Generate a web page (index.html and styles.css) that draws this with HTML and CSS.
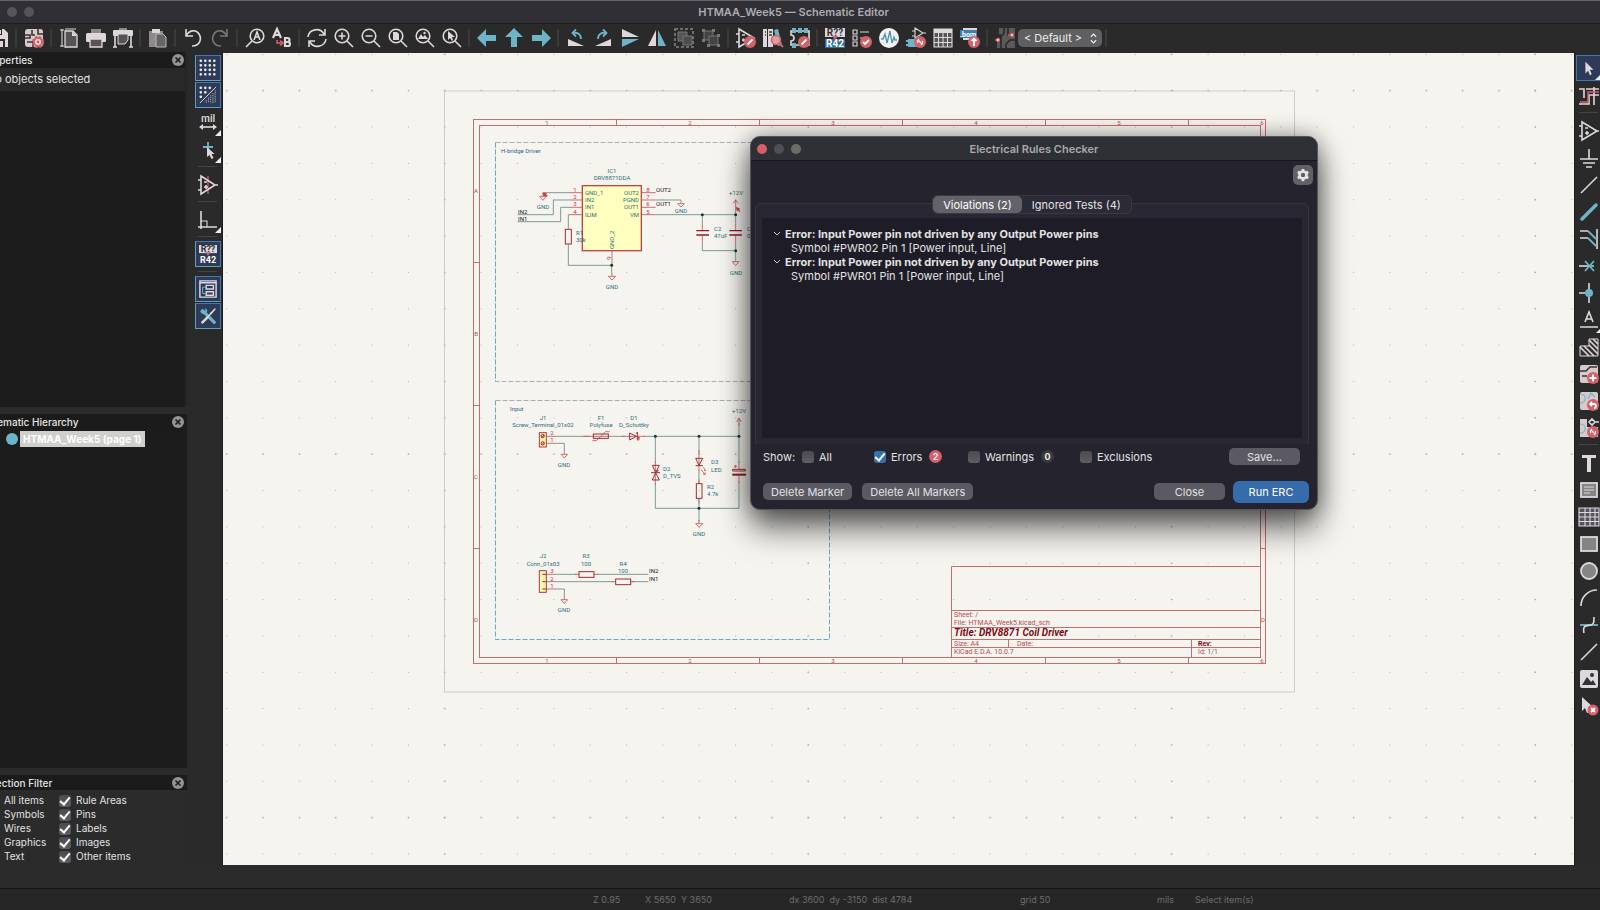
FILE: index.html
```html
<!DOCTYPE html>
<html lang="en">
<head>
<meta charset="utf-8">
<title>HTMAA_Week5 — Schematic Editor</title>
<link rel="stylesheet" href="styles.css">
</head>
<body>
<header class="titlebar">
  <span class="light"></span><span class="light"></span>
  <h1 class="window-title">HTMAA_Week5 — Schematic Editor</h1>
</header>

<nav class="toolbar" aria-label="Main toolbar">
  <button class="tool" aria-label="Save"><svg viewBox="0 0 20 20"><path class="lt" d="M1 1h14l4 4v14H1z"/><path class="bg" d="M5 1h8v6H5zM4 11h12v8H4z"/><path class="lt" d="M6 13h8v6H6zM10 2h2v4h-2z"/></svg></button>
  <i class="sep"></i>
  <button class="tool" aria-label="Schematic setup"><svg viewBox="0 0 20 20"><rect class="pk" x="1" y="1" width="18" height="18" rx="3"/><path class="dk-line" d="M1 7h5v3H1M14 1v5h5M8 2v5h3M3 14h6v5"/><circle cx="14" cy="14" r="5" fill="#d2616a"/><circle cx="14" cy="14" r="4.9" fill="none" stroke="#d2616a" stroke-width="2.4" stroke-dasharray="2.4 1.5"/><circle cx="14" cy="14" r="3" fill="#eadfe2"/><circle cx="14" cy="14" r="1.4" fill="#d2616a"/></svg></button>
  <i class="sep"></i>
  <button class="tool" aria-label="Page settings"><svg viewBox="0 0 20 20"><path class="ln thin" d="M3 1v18M1 2h4M1 18h4M6 1h11"/><path d="M6 3h8l4 4v12H6z" fill="#555" stroke="#ded8dc" stroke-width="1.3"/><path class="lt" d="M13 3v5h5z"/></svg></button>
  <button class="tool" aria-label="Print"><svg viewBox="0 0 20 20"><path class="gy" d="M5 1h10v5H5z"/><rect class="lt" y="5" width="20" height="9" rx="1.5"/><path d="M4 11h12v8H4z" fill="#555" stroke="#ded8dc" stroke-width="1.3"/></svg></button>
  <button class="tool" aria-label="Plot"><svg viewBox="0 0 20 20"><path class="gy" d="M6 0h8v3H6z"/><rect class="lt" y="2" width="20" height="6" rx="1"/><path class="ln" d="M2 8v11M18 8v11M0 19h4M16 19h4"/><path d="M5 6h10v6l-3 4H5z" fill="#555" stroke="#ded8dc"/></svg></button>
  <i class="sep"></i>
  <button class="tool" aria-label="Paste"><svg viewBox="0 0 20 20"><path class="gy" d="M1 3h14v16H1z"/><path class="lt" d="M4 1h8v4H4z"/><path d="M8 6h7l3 3v10H8z" fill="#666" stroke="#bdb8bb"/></svg></button>
  <i class="sep"></i>
  <button class="tool" aria-label="Undo"><svg viewBox="0 0 20 20"><path class="ln" d="M3 1v7h7M3 8C6 2 13 1 16 6s1 12-7 12"/></svg></button>
  <button class="tool" aria-label="Redo" disabled><svg viewBox="0 0 20 20"><path class="ln dim" d="M17 1v7h-7M17 8C14 2 7 1 4 6s-1 12 7 12"/></svg></button>
  <i class="sep"></i>
  <button class="tool" aria-label="Find"><svg viewBox="0 0 20 20"><circle class="ln" cx="12" cy="8" r="6.8"/><path class="ln" d="M7 13l-6 6M9 12l3-8 3 8M10 9h4"/></svg></button>
  <button class="tool" aria-label="Find and replace"><svg viewBox="0 0 20 20"><path class="ln bold" d="M1 10L5 1l4 9M2 7h6M13 10v8h3a2 2 0 000-4h-3 2.500a2 2 0 000-4z"/><path d="M5 12v3h5M8 12.500l3 2.500-3 2.500" fill="none" stroke="#d2616a" stroke-width="1.600"/></svg></button>
  <i class="sep"></i>
  <button class="tool" aria-label="Refresh"><svg viewBox="0 0 20 20"><path class="ln" d="M1 9C2 1 13-1 17 6M18 1v6h-6M19 11c-1 8-12 10-16 3M2 19v-6h6"/></svg></button>
  <button class="tool" aria-label="Zoom in"><svg viewBox="0 0 20 20"><circle class="ln" cx="8" cy="8" r="6.800"/><path class="ln" d="M13 13l6 6M8 4.500v7M4.500 8h7"/></svg></button>
  <button class="tool" aria-label="Zoom out"><svg viewBox="0 0 20 20"><circle class="ln" cx="8" cy="8" r="6.800"/><path class="ln" d="M13 13l6 6M4.500 8h7"/></svg></button>
  <button class="tool" aria-label="Zoom to page"><svg viewBox="0 0 20 20"><circle class="ln" cx="8" cy="8" r="6.800"/><path class="ln" d="M13 13l6 6"/><path class="lt" d="M5 4h4l2 2v6H5z"/></svg></button>
  <button class="tool" aria-label="Zoom to objects"><svg viewBox="0 0 20 20"><circle class="ln" cx="8" cy="8" r="6.800"/><path class="ln" d="M13 13l6 6"/><path class="lt" d="M3 11l3-5 2 3 2-2 3 4z"/><circle class="lt" cx="9.500" cy="5" r="1.200"/></svg></button>
  <button class="tool" aria-label="Zoom to selection"><svg viewBox="0 0 20 20"><circle class="ln" cx="8" cy="8" r="6.800"/><path class="ln" d="M13 13l6 6"/><path class="lt" d="M6 3v9l2-2 2 3 1-1-1-3h3z"/></svg></button>
  <i class="sep"></i>
  <button class="tool" aria-label="Back"><svg viewBox="0 0 20 20"><path class="bl" d="M0 10l9-9v6h10v6H9v6z"/></svg></button>
  <button class="tool" aria-label="Up"><svg viewBox="0 0 20 20"><path class="bl" d="M10 0l9 9h-6v10H7V9H1z"/></svg></button>
  <button class="tool" aria-label="Forward"><svg viewBox="0 0 20 20"><path class="bl" d="M20 10l-9-9v6H1v6h10v6z"/></svg></button>
  <i class="sep"></i>
  <button class="tool" aria-label="Rotate counterclockwise"><svg viewBox="0 0 20 20"><path class="lt" d="M2 11v7h16z"/><path class="bln" d="M15 11c0-5-4-7-8-6M10 1.500L6.500 5 10 8.500"/></svg></button>
  <button class="tool" aria-label="Rotate clockwise"><svg viewBox="0 0 20 20"><path class="lt" d="M18 11v7H2z"/><path class="bln" d="M5 11c0-5 4-7 8-6M10 1.500L13.500 5 10 8.500"/></svg></button>
  <button class="tool" aria-label="Mirror vertically"><svg viewBox="0 0 20 20"><path class="lt" d="M2 1v8h17z"/><path class="bl" d="M2 19v-8h17z"/></svg></button>
  <button class="tool" aria-label="Mirror horizontally"><svg viewBox="0 0 20 20"><path class="lt" d="M9 2v16H1z"/><path class="bl" d="M11 2v16h8z"/></svg></button>
  <button class="tool" aria-label="Group" disabled><svg viewBox="0 0 20 20"><rect x="1" y="1" width="18" height="18" fill="none" stroke="#858585" stroke-width="1.500" stroke-dasharray="3 2"/><path d="M4 4h9v9H4z" fill="#555" stroke="#777"/><path d="M9 8h9v9H9z" fill="#4c4c4c" stroke="#777"/></svg></button>
  <button class="tool" aria-label="Ungroup" disabled><svg viewBox="0 0 20 20"><path d="M3 3h9v9H3z" fill="#444" stroke="#777"/><path d="M8 8h9v9H8z" fill="#444" stroke="#777"/><path d="M1 1h3v3H1zM11 1h3v3h-3zM1 11h3v3H1zM16 6h3v3h-3zM16 16h3v3h-3zM6 16h3v3H6z" fill="#777"/></svg></button>
  <i class="sep"></i>
  <button class="tool" aria-label="Symbol editor"><svg viewBox="0 0 20 20"><path class="ln" d="M3 1v18L18 10zM0 6h3M0 14h3M6 7h3M6 12h3M7.500 10.500v3"/><circle class="rd" cx="14" cy="14" r="6"/><path class="wl" d="M11.500 16.500l5-5"/></svg></button>
  <button class="tool" aria-label="Symbol libraries"><svg viewBox="0 0 20 20"><path class="lt" d="M0 1h4v18H0zM5 1h5v18H5z"/><path class="dk-line" d="M2 4h1M6 4h3M6 7h3M2 7h1"/><path class="bl" d="M11 2l4-1 4 16-4 1z"/><circle cx="13" cy="12" r="4.500" fill="#d9a0a5" stroke="#d2616a" stroke-width="1.600"/><path d="M16 15l4 4" stroke="#d2616a" stroke-width="2"/></svg></button>
  <button class="tool" aria-label="Footprint editor"><svg viewBox="0 0 20 20"><path class="ln" d="M1 3v4a3 3 0 010 6v4h18V3z"/><path class="bl" d="M2 0h4v5H2zM8 0h4v5H8zM14 0h4v5h-4zM2 15h4v5H2z"/><circle class="rd" cx="14" cy="14" r="6"/><path class="wl" d="M11.500 16.500l5-5"/></svg></button>
  <i class="sep"></i>
  <button class="tool" aria-label="Annotate"><svg viewBox="0 0 20 20"><path class="lt" d="M0 0h20v9H0z"/><path fill="#2d6ca4" d="M0 11h20v9H0z"/><path class="rd" d="M7 8h6l-3 4z"/><text class="t42 dark" x="10" y="8" text-anchor="middle">R??</text><text class="t42" x="10" y="19" text-anchor="middle">R42</text></svg></button>
  <button class="tool" aria-label="Electrical rules checker"><svg viewBox="0 0 20 20"><path class="ln thin" d="M1 2h4v4H1zM1 8h4v4H1zM1 14h4v4H1zM8 4h9M8 10h4"/><circle class="rd" cx="14" cy="14" r="6"/><path class="wl" d="M11 14l2 2 4-4"/></svg></button>
  <button class="tool" aria-label="Simulator"><svg viewBox="0 0 20 20"><circle cx="10" cy="10" r="10" fill="#f3f3f3"/><path d="M2 11h2l2-5 2 9 3-12 2 12 2-6 1 3h2" fill="none" stroke="#4796ad" stroke-width="1.300"/></svg></button>
  <button class="tool" aria-label="Assign footprints"><svg viewBox="0 0 20 20"><path class="ln thin" d="M9 0v10l8-5zM6 3h3M6 8h3M17 5h3"/><path class="bl" d="M2 11h8v8H2zM0 12h2v2H0zM0 16h2v2H0z"/><circle class="rd" cx="14" cy="14" r="6"/><path class="wl thin" d="M12 15a2 2 0 010-3l1-1M16 13a2 2 0 010 3l-1 1M12.500 12.500l3 3"/></svg></button>
  <button class="tool" aria-label="Symbol fields table"><svg viewBox="0 0 20 20"><path fill="#555" d="M1 1h18v18H1z"/><path class="lt" d="M1 1h18v4H1z"/><path class="ln thin" d="M1 1h18v18H1zM1 9.500h18M1 14.500h18M5.500 5v14M10 5v14M14.500 5v14"/></svg></button>
  <button class="tool" aria-label="Bill of materials"><svg viewBox="0 0 20 20"><path class="lt" d="M3 0h14v12H3z"/><path fill="#3f7fb0" d="M0 2h17v8H0z"/><text class="tbom" x="8" y="9" text-anchor="middle">.bom</text><circle class="rd" cx="14" cy="14" r="6"/><path class="wl" d="M14 18v-7M11.500 13l2.500-2.500 2.500 2.500"/></svg></button>
  <i class="sep"></i>
  <button class="tool" aria-label="Open PCB"><svg viewBox="0 0 20 20"><path fill="#5a5a5a" d="M4 0h16v20H2v-6h4V6H4z"/><path d="M9 0v5l-3 4v11M13 0v7h7M20 12h-5l-4 4v4" fill="none" stroke="#292929" stroke-width="1.600"/><path d="M0 12h3M13 7h5" stroke="#d2616a" stroke-width="1.300"/><circle cx="3" cy="12" r="1.600" fill="#eee" stroke="#d2616a" stroke-width="1.300"/><circle cx="17" cy="7" r="1.600" fill="#eee" stroke="#d2616a" stroke-width="1.300"/></svg></button>
  <label class="variant"><select aria-label="Design variant"><option>&lt; Default &gt;</option></select><svg viewBox="0 0 8 12"><path d="M1 4l3-3 3 3M1 8l3 3 3-3"/></svg></label>
  <i class="sep"></i>
</nav>

<main class="workspace">
  <aside class="sidebar">
    <section class="panel panel-props">
      <h2 class="panel-head"><span class="cut cut-a">Properties</span><button class="close" aria-label="Close properties"><svg viewBox="0 0 12 12"><circle cx="6" cy="6" r="6"/><path d="M3.500 3.500l5 5M8.500 3.500l-5 5"/></svg></button></h2>
      <p class="note"><span class="cut cut-b">No objects selected</span></p>
    </section>
    <section class="panel panel-tree">
      <h2 class="panel-head"><span class="cut cut-c">Schematic Hierarchy</span><button class="close" aria-label="Close hierarchy"><svg viewBox="0 0 12 12"><circle cx="6" cy="6" r="6"/><path d="M3.500 3.500l5 5M8.500 3.500l-5 5"/></svg></button></h2>
      <div class="tree-row"><span class="node"></span><span class="node-label">HTMAA_Week5 (page 1)</span></div>
    </section>
    <section class="filter">
      <h2 class="panel-head"><span class="cut cut-d">Selection Filter</span><button class="close" aria-label="Close filter"><svg viewBox="0 0 12 12"><circle cx="6" cy="6" r="6"/><path d="M3.500 3.500l5 5M8.500 3.500l-5 5"/></svg></button></h2>
      <div class="filter-grid">
        <span>All items</span><label><input type="checkbox" checked>Rule Areas</label>
        <span>Symbols</span><label><input type="checkbox" checked>Pins</label>
        <span>Wires</span><label><input type="checkbox" checked>Labels</label>
        <span>Graphics</span><label><input type="checkbox" checked>Images</label>
        <span>Text</span><label><input type="checkbox" checked>Other items</label>
      </div>
    </section>
  </aside>

  <nav class="side-tools left-tools" aria-label="View tools">
    <button class="tool on" aria-label="Grid"><svg viewBox="0 0 20 20"><path class="dots" d="M2 2h18M2 7h18M2 12h18M2 17h18"/></svg></button>
    <button class="tool on" aria-label="Grid overrides"><svg viewBox="0 0 20 20"><path class="dots" d="M2 2h12M2 7h6M2 12h2"/><path class="ln thin" d="M1 19L19 1"/><path class="ln fine" d="M18 5v14M15.500 8v11M13 10.500v8.500M10.500 13v6M8 15.500v3.500"/></svg></button>
    <button class="tool corner" aria-label="Units"><svg viewBox="0 0 20 20"><text class="tmil" x="10" y="9" text-anchor="middle">mil</text><path class="ln" d="M3 14h14"/><path class="lt" d="M1 14l4-3v6zM19 14l-4-3v6z"/></svg></button>
    <button class="tool corner" aria-label="Cursor shape"><svg viewBox="0 0 20 20"><path class="bln" d="M10 2v10M5 7h10"/><path class="lt" d="M9 7v10l2.500-2 2 4 2-1-2-4h3z"/></svg></button>
    <i class="hsep"></i>
    <button class="tool" aria-label="Hidden pins"><svg viewBox="0 0 20 20"><path d="M10 1v18" stroke="#b65a62" stroke-width="1.500"/><path class="ln" d="M3 1v18L17 10zM0 5h3M0 15h3M17 10h3M6 12h4M8 10v4M6 7h3"/></svg></button>
    <i class="hsep"></i>
    <button class="tool corner" aria-label="Line mode"><svg viewBox="0 0 20 20"><path class="ln" d="M3 1v18M0 17h19"/><path class="ln thin" d="M3 11h6v6"/></svg></button>
    <i class="hsep"></i>
    <button class="tool on" aria-label="Auto annotate"><svg viewBox="0 0 20 20"><path class="lt" d="M0 0h20v9H0z"/><path class="rd" d="M7 8h6l-3 4z"/><text class="t42 dark" x="10" y="8" text-anchor="middle">R??</text><text class="t42" x="10" y="20" text-anchor="middle">R42</text></svg></button>
    <i class="hsep"></i>
    <button class="tool on" aria-label="Hierarchy"><svg viewBox="0 0 20 20"><path class="ln" d="M1 1h18v18H1zM1 3h18"/><path class="ln" d="M8 6h8v4H8zM8 13h8v4H8z"/><path class="bln thin" d="M8 8H4v7h4"/></svg></button>
    <button class="tool on" aria-label="Properties"><svg viewBox="0 0 20 20"><path d="M4 4l13 13" stroke="#6cb4c8" stroke-width="3.500" stroke-linecap="round"/><path d="M1 4a5 5 0 004 4 4 4 0 004-5L7 1v4H4z" fill="#6cb4c8"/><path class="lt" d="M19 1l-7 6 1 2zM9 10l2 2-7 7-2-2z"/><path class="ln" d="M18 2L9 12"/></svg></button>
  </nav>

  <div class="canvas">
    <svg class="sheet" aria-label="Schematic sheet">
      <defs>
        <pattern id="dots" x="208.500" y="72.500" width="36.350" height="36.350" patternUnits="userSpaceOnUse"><rect x="17.700" y="17.700" width="1" height="1" fill="#b4b4b4"/></pattern>
        <pattern id="row" x="208.500" y="72.500" width="36.350" height="363.500" patternUnits="userSpaceOnUse"><rect x="17.500" y="17.500" width="1.500" height="1.300" fill="#aaa"/></pattern>
        <pattern id="col" x="426.500" y="72.500" width="363.500" height="36.350" patternUnits="userSpaceOnUse"><rect x="17.500" y="17.500" width="1.500" height="1.300" fill="#aaa"/></pattern>
      </defs>
      <g transform="translate(-223 -53)">
        <g><rect width="4000" height="3000" fill="url(#dots)"/><rect width="4000" height="3000" fill="url(#row)"/><rect width="4000" height="3000" fill="url(#col)"/></g>
        <rect class="page" x="444.500" y="91" width="850" height="601"/>
        <g class="frame">
          <rect x="473.500" y="119.500" width="792" height="544"/><rect x="479.500" y="125.500" width="781" height="532"/>
          <path d="M616.500 119.500v6M759.500 119.500v6M902.500 119.500v6M1045.500 119.500v6M1188.500 119.500v6M616.500 657.500v6M759.500 657.500v6M902.500 657.500v6M1045.500 657.500v6M1188.500 657.500v6M473.500 262.500h6M473.500 405.500h6M473.500 548.500h6M1260.500 262.500h5M1260.500 405.500h5M1260.500 548.500h5"/>
          <path d="M951.500 657.500V566.500h309M951.500 610.500h309M951.500 627.500h309M951.500 639.500h309M951.500 647.500h309M1008.500 639.500v8M1191.500 639.500v18"/>
        </g>
        <g class="frame-text mid">
          <text x="547" y="125">1</text><text x="690" y="125">2</text><text x="833" y="125">3</text><text x="976" y="125">4</text><text x="1119" y="125">5</text><text x="1262" y="125">6</text>
          <text x="547" y="663">1</text><text x="690" y="663">2</text><text x="833" y="663">3</text><text x="976" y="663">4</text><text x="1119" y="663">5</text><text x="1262" y="663">6</text>
          <text x="476" y="193">A</text><text x="476" y="336">B</text><text x="476" y="479">C</text><text x="476" y="622">D</text><text x="1263" y="622">D</text>
        </g>
        <g class="frame-text info">
          <text x="954" y="617">Sheet: /</text><text x="954" y="625">File: HTMAA_Week5.kicad_sch</text>
          <text class="doc-title" x="954" y="636">Title: DRV8871 Coil Driver</text>
          <text x="954" y="646">Size: A4</text><text x="1017" y="646">Date:</text><text class="rev" x="1198" y="646">Rev:</text>
          <text x="954" y="654">KiCad E.D.A. 10.0.7</text><text x="1198" y="654">Id: 1/1</text>
        </g>
        <g class="zone"><path class="gray" d="M495.500 142.500h334v239h-334z"/><path d="M495.500 142.500v239M829.500 142.500v239"/><path class="gray" d="M495.500 400.500h334"/><path d="M495.500 400.500v239h334v-239"/></g>

        <g transform="translate(465 110) scale(.33333)">
          <rect class="chip" x="352" y="227" width="177" height="195"/>
          <path class="wire" d="M234 248h78M158 314h107v-44h47M158 335h129v-43h25M310 357v-43h2M310 403v63h130v24M572 270h76v10M572 314h240v26M712 314v26M712 400v22h100v33M812 400v22M812 300v14"/>
          <path class="pin" d="M312 248h40M312 270h40M312 292h40M312 314h40M530 248h42M530 270h42M530 292h42M530 314h42M441 422v44M712 340v22M712 376v24M812 340v22M812 376v24M812 300v-30M804 280l8-10 8 10"/>
          <path class="pin" d="M224 259h20l-10 12zM234 248v11M430 499h22l-11 11zM441 490v9M638 281h20l-10 10zM802 455h20l-10 12z"/>
          <path class="err" d="M232 248l5 12 3-3 6 4 2-5-5-3 3-4zM812 290l4 14 3-3 4 5 3-3-4-5 4-2z"/>
          <rect class="res" x="301" y="358" width="18" height="44"/>
          <path class="plate" d="M694 362h38M694 375h38M793 362h38M793 375h38"/>
          <g class="dot"><circle cx="440" cy="466" r="4.500"/><circle cx="712" cy="314" r="4.500"/><circle cx="812" cy="314" r="4.500"/><circle cx="812" cy="422" r="4.500"/></g>
        </g>
        <g transform="translate(485 390) scale(.33333)">
          <path class="wire" d="M215 139h100M380 139h40M475 139h287v80M762 100v39M215 160h23v24M511 139v80M511 280v75h251v-80M642 139v50M642 240v40M642 326v70M215 553h60M335 553h155M215 575h170M440 575h50M215 597h23v24"/>
          <path class="pin" d="M185 139h30M185 160h30M295 139h85M410 139h70M511 215v70M642 180v62M642 268v12M642 326v14M762 215v24M762 257v22M755 96l7-12 7 12M762 84v22M185 553h30M185 575h30M185 597h30M270 553h12M326 553h14M380 575h12M436 575h14M322 152h12l28-27h12M747 229h9M751 225v9M655 232l7 10-5-1M648 238l12 16-6-2M660 254l1-7"/>
          <path class="pin" d="M228 193h20l-10 11zM238 184v9M632 401h21l-11 11zM642 390v11M228 629h20l-10 11zM238 620v9"/>
          <rect class="res" x="325" y="132" width="45" height="13"/>
          <rect class="res" x="634" y="281" width="17" height="44"/><rect class="res" x="282" y="545" width="45" height="17"/><rect class="res" x="392" y="567" width="45" height="17"/>
          <rect class="conn" x="163" y="128" width="21" height="43"/><rect class="conn" x="163" y="542" width="21" height="65"/>
          <path class="comp" d="M434 129l20 10-20 11zM457 128v22h4M453 130l6-3M502 226h21l-11 22zM502 270h21l-11-22zM498 248h27M632 205h21l-11 21zM632 227h22M172 553h12M172 575h12M172 597h12M169 142l9-7M169 164l9-7M743 238h38v5h-38z"/>
          <circle class="comp" cx="173" cy="138" r="5"/><circle class="comp" cx="173" cy="160" r="5"/>
          <path class="plate thick" d="M742 254h41"/>
          <path class="err" d="M456 142l8-2-1 11zM510 240h12l-6 8z"/>
          <g class="dot"><circle cx="511" cy="139" r="4.500"/><circle cx="642" cy="139" r="4.500"/><circle cx="762" cy="139" r="4.500"/><circle cx="642" cy="355" r="4.500"/></g>
        </g>

        <g class="lab">
          <text class="note-t" x="501" y="153">H-bridge Driver</text><text class="note-t" x="510" y="411">Input</text>
          <text x="585" y="195">GND_1</text><text x="585" y="202">IN2</text><text x="585" y="209">IN1</text><text x="585" y="217">ILIM</text>
          <text x="714" y="231">C2</text><text x="714" y="238">47uF</text><text x="576" y="235">R1</text><text x="576" y="242">30k</text><text x="747" y="231">C3</text><text x="747" y="238">0.1uF</text>
          <text x="663" y="471">D2</text><text x="663" y="478">D_TVS</text><text x="711" y="464">D3</text><text x="711" y="472">LED</text><text x="707" y="489">R2</text><text x="707" y="496">4.7k</text>
          <text transform="translate(614 249) rotate(-90)">GND_2</text>
        </g>
        <g class="lab net"><text x="656" y="192">OUT2</text><text x="656" y="206">OUT1</text><text x="518" y="214">IN2</text><text x="518" y="221">IN1</text><text x="649" y="573">IN2</text><text x="649" y="581">IN1</text></g>
        <g class="lab end"><text x="639" y="195">OUT2</text><text x="639" y="202">PGND</text><text x="639" y="209">OUT1</text><text x="639" y="217">VM</text></g>
        <g class="lab mid">
          <text x="612" y="173">IC1</text><text x="612" y="180">DRV8871DDA</text><text x="681" y="213">GND</text><text x="543" y="209">GND</text><text x="736" y="195">+12V</text><text x="736" y="275">GND</text><text x="612" y="289">GND</text>
          <text x="543" y="420">J1</text><text x="543" y="427">Screw_Terminal_01x02</text><text x="601" y="420">F1</text><text x="601" y="427">Polyfuse</text><text x="634" y="420">D1</text><text x="634" y="427">D_Schottky</text>
          <text x="564" y="467">GND</text><text x="699" y="536">GND</text><text x="739" y="413">+12V</text><text x="543" y="558">J2</text><text x="543" y="566">Conn_01x03</text><text x="586" y="558">R3</text><text x="586" y="566">100</text><text x="623" y="566">R4</text><text x="623" y="573">100</text><text x="564" y="612">GND</text>
        </g>
        <g class="pin-no mid">
          <text x="575" y="192">1</text><text x="575" y="199">2</text><text x="575" y="206">3</text><text x="575" y="214">4</text><text x="648" y="192">8</text><text x="648" y="199">7</text><text x="648" y="206">6</text><text x="648" y="214">5</text>
          <text transform="translate(611 258) rotate(-90)">9</text>
          <text x="552" y="435">2</text><text x="552" y="442">1</text><text x="552" y="573">3</text><text x="552" y="581">2</text><text x="552" y="588">1</text>
        </g>
      </g>
    </svg>
  </div>

  <nav class="side-tools right-tools" aria-label="Drawing tools">
    <button class="tool on corner" aria-label="Select"><svg viewBox="0 0 20 20"><path class="lt" d="M6 3v13l3-3 2 5 2-1-2-5h4z"/></svg></button>
    <button class="tool" aria-label="Highlight net"><svg viewBox="0 0 20 20"><path class="ln" d="M0 3h5v9M0 18h10V9h10M15 1v18M7 3h13"/><path d="M1 16h8V6h11" fill="none" stroke="#d2616a" stroke-width="1.500"/></svg></button>
    <i class="hsep"></i>
    <button class="tool" aria-label="Place symbol"><svg viewBox="0 0 20 20"><path class="ln" d="M3 1v18L18 10zM0 5h3M0 15h3M18 10h2M6 12h4M8 10v4M6 7h3"/></svg></button>
    <button class="tool" aria-label="Place power"><svg viewBox="0 0 20 20"><path class="ln" d="M10 1v10M1 11h18M4 15h12M7 19h6"/></svg></button>
    <button class="tool" aria-label="Draw wire"><svg viewBox="0 0 20 20"><path class="ln" d="M2 18L18 2"/></svg></button>
    <button class="tool" aria-label="Draw bus"><svg viewBox="0 0 20 20"><path d="M3 17L17 3" stroke="#6cb4c8" stroke-width="3.500" stroke-linecap="round"/></svg></button>
    <button class="tool" aria-label="Wire to bus entry"><svg viewBox="0 0 20 20"><path class="ln" d="M1 2h8M1 9h8M18 0v20"/><path class="bln" d="M9 2l8 8M9 9l8 8"/></svg></button>
    <button class="tool" aria-label="No connect"><svg viewBox="0 0 20 20"><path class="ln" d="M0 10h10"/><path class="bln" d="M6 5l9 10M15 5L6 15M10 10h5"/></svg></button>
    <button class="tool" aria-label="Junction"><svg viewBox="0 0 20 20"><path class="ln" d="M10 0v20M0 10h10"/><circle class="bl" cx="10" cy="10" r="4"/></svg></button>
    <button class="tool corner" aria-label="Net label"><svg viewBox="0 0 20 20"><path class="ln" d="M6 12l4-10 4 10M7 9h6M1 17h18"/></svg></button>
    <button class="tool" aria-label="Rule area"><svg viewBox="0 0 20 20"><path d="M10 2h9v17H1V9h9z" fill="#333" stroke="#ded8dc"/><path class="ln" d="M10 3l9 9M10 8l9 9M5 9l10 10M1 10l9 9M14 2l5 5"/></svg></button>
    <button class="tool" aria-label="Draw sheet"><svg viewBox="0 0 20 20"><rect class="pk" x="1" y="1" width="18" height="18" rx="2"/><path class="dk-line" d="M1 7h6l4-4h7M3 12h5"/><circle class="rd" cx="14" cy="14" r="6"/><path class="wl" d="M14 10.500v7M10.500 14h7"/></svg></button>
    <button class="tool" aria-label="Sync sheet pins"><svg viewBox="0 0 20 20"><rect class="pk" x="1" y="1" width="18" height="18" rx="2"/><path class="bln thin" d="M1 3c7 0 7 9 0 9M9 8l3-6 4 4"/><circle class="rd" cx="14" cy="14" r="6"/><path class="wl" d="M11 13h4a2 2 0 010 4M13 11l-2 2 2 2"/></svg></button>
    <button class="tool" aria-label="Import sheet pins"><svg viewBox="0 0 20 20"><path class="pk" d="M1 1h7v8h11v10H1z"/><path class="bln thin" d="M1 6c7 0 7 9 0 9"/><path class="ln" d="M13 1l3 3-3 3-3-3zM16 4h4"/><circle class="rd" cx="14" cy="14" r="6"/><path class="wl thin" d="M12 15a2 2 0 010-3l1-1M16 13a2 2 0 010 3l-1 1M12.500 12.500l3 3"/></svg></button>
    <i class="hsep"></i>
    <button class="tool" aria-label="Text"><svg viewBox="0 0 20 20"><path class="lt" d="M3 2h14v3h-5v14H8V5H3z"/></svg></button>
    <button class="tool" aria-label="Text box"><svg viewBox="0 0 20 20"><rect class="shape" x="2" y="3" width="16" height="14"/><path class="ln thin" d="M5 7h10M5 10h10M5 13h6"/></svg></button>
    <button class="tool" aria-label="Table"><svg viewBox="0 0 20 20"><path fill="#57535f" d="M0 1h20v18H0z"/><path class="ln thin" d="M0 1h20v18H0zM0 5.500h20M0 10h20M0 14.500h20M6 1v18M11 1v18M16 1v18"/></svg></button>
    <button class="tool" aria-label="Rectangle"><svg viewBox="0 0 20 20"><rect class="shape" x="2" y="3" width="16" height="14"/></svg></button>
    <button class="tool" aria-label="Circle"><svg viewBox="0 0 20 20"><circle class="shape" cx="10" cy="10" r="8"/></svg></button>
    <button class="tool" aria-label="Arc"><svg viewBox="0 0 20 20"><path class="ln" d="M2 18C2 9 9 2 18 2"/></svg></button>
    <button class="tool" aria-label="Bezier"><svg viewBox="0 0 20 20"><path class="bln" d="M1 10h18"/><path class="ln" d="M5 18c-2-9 4-7 7-8s3-3 3-8"/></svg></button>
    <button class="tool" aria-label="Line"><svg viewBox="0 0 20 20"><path class="ln" d="M2 18L18 2"/></svg></button>
    <button class="tool" aria-label="Image"><svg viewBox="0 0 20 20"><rect class="lt" x="1" y="1" width="18" height="18" rx="2"/><path d="M3 16l5-8 4 5 2-2 3 5z" fill="#333"/><circle cx="13" cy="6" r="2" fill="#333"/></svg></button>
    <button class="tool" aria-label="Delete"><svg viewBox="0 0 20 20"><path class="lt" d="M3 1v14l3-3 2 5 3-1-2-5h5z"/><circle class="rd" cx="14" cy="14" r="5.500"/><path class="wl" d="M12 12l4 4M16 12l-4 4"/></svg></button>
  </nav>
</main>
<div class="infobar"></div>
<footer class="status"><span></span><span>Z 0.95</span><span>X 5650&nbsp; Y 3650</span><span>dx 3600&nbsp; dy -3150&nbsp; dist 4784</span><span>grid 50</span><span>mils</span><span>Select item(s)</span></footer>

<section class="dialog" role="dialog" aria-labelledby="dlg-title">
  <header class="dialog-bar"><i class="dl red"></i><i class="dl"></i><i class="dl hi"></i><h2 id="dlg-title">Electrical Rules Checker</h2></header>
  <div class="dialog-top"><button class="gear" aria-label="Settings"><svg viewBox="0 0 16 16"><circle cx="8" cy="8" r="4" fill="none" stroke="#e6e6e8" stroke-width="3"/><path d="M8 1v3M8 12v3M2 4.500l2.600 1.500M11.400 10l2.600 1.500M2 11.500l2.600-1.500M11.400 6L14 4.500" stroke="#e6e6e8" stroke-width="3"/></svg></button></div>
  <div class="notebook">
    <div class="tabs" role="tablist"><button role="tab" class="tab sel" aria-selected="true">Violations (2)</button><button role="tab" class="tab">Ignored Tests (4)</button></div>
    <ul class="results">
      <li class="rule"><svg viewBox="0 0 8 6"><path d="M1 1l3 3 3-3"/></svg>Error: Input Power pin not driven by any Output Power pins</li>
      <li class="item">Symbol #PWR02 Pin 1 [Power input, Line]</li>
      <li class="rule"><svg viewBox="0 0 8 6"><path d="M1 1l3 3 3-3"/></svg>Error: Input Power pin not driven by any Output Power pins</li>
      <li class="item">Symbol #PWR01 Pin 1 [Power input, Line]</li>
    </ul>
  </div>
  <div class="show">
    <span>Show:</span>
    <label><input type="checkbox">All</label>
    <label><input type="checkbox" checked>Errors</label><b class="badge bad">2</b>
    <label><input type="checkbox">Warnings</label><b class="badge">0</b>
    <label><input type="checkbox">Exclusions</label>
    <button class="btn std">Save...</button>
  </div>
  <div class="actions"><button class="btn">Delete Marker</button><button class="btn">Delete All Markers</button><span class="grow"></span><button class="btn std">Close</button><button class="btn primary">Run ERC</button></div>
</section>
</body>
</html>
```

FILE: styles.css
```css
* { box-sizing: border-box; }
body { margin: 0; height: 100vh; display: flex; flex-direction: column; overflow: hidden; position: relative; background: #2b2b2b; color: #e2e2e2; font-family: Inter, "Liberation Sans", sans-serif; font-size: 11px; }
h1, h2, p, ul { margin: 0; padding: 0; }
button { font: inherit; color: inherit; border: 0; padding: 0; background: none; }
.titlebar { flex: none; height: 24px; background: #302f36; border-top: 1px solid #626468; border-bottom: 1px solid #1d1d1e; display: flex; align-items: center; gap: 7px; padding-left: 7px; }
.light { width: 10px; height: 10px; border-radius: 50%; background: #55545a; }
.window-title { flex: 1; text-align: center; font-size: 11px; font-weight: 600; color: #acacb0; padding-right: 54px; }
.toolbar { flex: none; height: 28px; margin-left: -15px; display: flex; align-items: center; background: #2a2a2a; }
.tool { flex: none; width: 27px; height: 27px; display: flex; align-items: center; justify-content: center; position: relative; }
.tool svg { width: 20px; height: 20px; overflow: visible; }
.sep { flex: none; width: 2px; height: 18px; margin: 0 3px; background: #3a3a3a; }
.lt { fill: #ded8dc; } .pk { fill: #d8c9cb; } .gy { fill: #8d8a8c; } .bg { fill: #2a2a2a; } .bl { fill: #6cb4c8; } .rd { fill: #d2616a; }
.ln { fill: none; stroke: #ded8dc; stroke-width: 1.6; }
.bln { fill: none; stroke: #6cb4c8; stroke-width: 1.8; }
.wl { fill: none; stroke: #fff; stroke-width: 1.8; }
.thin { stroke-width: 1.1; } .bold { stroke-width: 2.2; } .dim { stroke: #777; }
.dk-line { fill: none; stroke: #373537; stroke-width: 1.6; }
.fine { stroke-width: 1; stroke-dasharray: 1 1; }
.dots { fill: none; stroke: #e8e8e8; stroke-width: 3; stroke-dasharray: 0 5; stroke-linecap: round; }
.shape { fill: #858585; stroke: #ded8dc; stroke-width: 1.8; }
.t42 { font: 700 10px Roboto, sans-serif; fill: #fff; } .t42.dark { fill: #333; }
.tbom { font: 700 7px Roboto, sans-serif; fill: #fff; } .tmil { font: 600 10px Inter, sans-serif; fill: #ded8dc; }
.variant { position: relative; display: flex; align-items: center; }
.variant select { appearance: none; width: 84px; height: 18px; border: 0; border-radius: 5px; background: #5f5f61; color: #eee; font: 11px Inter, sans-serif; padding: 0 6px; }
.variant svg { position: absolute; right: 5px; width: 7px; height: 11px; fill: none; stroke: #eee; stroke-width: 1.4; pointer-events: none; }

.workspace { flex: 1; min-height: 0; display: flex; }
.sidebar { flex: none; width: 187px; display: flex; flex-direction: column; gap: 7px; overflow: hidden; }
.panel { flex: 1; background: #1c1c1c; border-right: 2px solid #262626; }
.panel-tree { border: 0; }
.panel-head { height: 16px; display: flex; align-items: center; justify-content: space-between; background: #1b1b1b; font-size: 10px; font-weight: 500; padding-right: 3px; white-space: nowrap; }
.panel-props .panel-head { padding-right: 1px; }
.close { width: 12px; height: 12px; display: flex; }
.close svg { width: 12px; height: 12px; fill: #949494; stroke: #1b1b1b; stroke-width: 1.6; }
.close circle { stroke: none; }
.cut-a { margin-left: -17px; } .cut-b { margin-left: -13px; } .cut-c { margin-left: -21px; } .cut-d { margin-left: -19px; }
.note { height: 23px; background: #282828; line-height: 22px; white-space: nowrap; }
.tree-row { display: flex; align-items: center; gap: 2px; padding-left: 6px; margin-top: 1px; }
.node { width: 12px; height: 12px; border-radius: 50%; background: #6cb4c8; }
.node-label { background: #cfcfcc; color: #fff; font-size: 10px; font-weight: 700; line-height: 16px; padding: 0 3px; }
.filter { height: 90px; flex: none; }
.filter .panel-head { height: 15px; }
.filter-grid { display: grid; grid-template-columns: 55px 1fr; row-gap: 1px; padding: 4px 0 0 4px; line-height: 13px; grid-auto-rows: 13px; font-size: 10px; }
.filter-grid label { display: flex; align-items: center; gap: 5px; }
input[type=checkbox] { appearance: none; flex: none; width: 12px; height: 12px; margin: 0; border-radius: 3px; background: linear-gradient(#4a4a4f, #5e5e64); display: grid; place-items: center; }
input:checked::after { content: ""; width: 4px; height: 8px; border: solid #fff; border-width: 0 2px 2px 0; transform: rotate(40deg); margin-top: -2px; }

.side-tools { flex: none; display: flex; flex-direction: column; background: #2a2a2a; padding-top: 3px; overflow: hidden; }
.left-tools { width: 36px; padding-left: 7px; border-right: 1px solid #1c1c1c; }
.right-tools { width: 26px; border-left: 1px solid #1c1c1c; }
.hsep { flex: none; height: 1px; width: 19px; margin: 3px 4px 4px; background: #444; }
.on { background: #2d3b58; border: 1px solid #3f78b2; background-clip: padding-box; width: 26px; height: 26px; margin: 0 0 1px 1px; }
.on svg { width: 18px; height: 18px; }
.left-tools .on { border-left-color: #5f9fb8; border-bottom-color: #5f9fb8; }
.corner::after { content: ""; position: absolute; right: 0; bottom: 0; border: solid transparent; border-width: 0 0 6px 6px; border-bottom-color: #eee; }
.canvas { flex: 1; min-width: 0; margin-top: 1px; background: #f5f4ef; overflow: hidden; }
.sheet { display: block; width: 100%; height: 100%; }
.page { fill: none; stroke: #ccccca; }
.frame { fill: none; stroke: #c96d70; stroke-width: 1; }
.frame-text { font: 6px Roboto, sans-serif; fill: #b64b50; }
.info { font-size: 7px; }
.doc-title { font: italic 700 10px Roboto, sans-serif; fill: #7d0c14; }
.rev { font-weight: 700; fill: #7d0c14; }
.mid { text-anchor: middle; } .end { text-anchor: end; }
.zone { fill: none; stroke: #62adc4; stroke-width: 1; stroke-dasharray: 5 2; }
.gray { stroke: #aaadb8; }
.wire { fill: none; stroke: #6b8f86; stroke-width: 2.6; }
.pin { fill: none; stroke: #c8595e; stroke-width: 2.6; }
.comp, .res { fill: none; stroke: #a02c34; stroke-width: 3; }
.chip { fill: #ffffc0; stroke: #c24349; stroke-width: 4; }
.conn { fill: #fff6b0; stroke: #b23a40; stroke-width: 3; }
.plate { stroke: #8c1c24; stroke-width: 4; } .thick { stroke-width: 6; }
.err { fill: #d03b42; } .dot { fill: #1f3a36; }
.lab { font: 6px Roboto, sans-serif; fill: #2c7078; }
.note-t { fill: #2f6690; } .net { fill: #222; }
.pin-no { font: 6px Roboto, sans-serif; fill: #c03a40; }
.infobar { flex: none; height: 23px; }
.status { flex: none; height: 22px; border-top: 1px solid #161616; background: #262626; color: #6d6d6d; font-size: 9px; display: grid; grid-template-columns: 593fr 52fr 144fr 231fr 137fr 38fr 405fr; align-items: center; white-space: nowrap; }
.status span { min-width: 0; }

.dialog { position: absolute; left: 750px; top: 136px; width: 568px; background: #25232d; border: 1px solid #56565a; border-radius: 10px; box-shadow: 0 18px 32px rgba(0,0,0,.6), 0 0 22px rgba(0,0,0,.35); overflow: hidden; display: flex; flex-direction: column; height: 374px; }
.dialog-bar { height: 24px; flex: none; display: flex; align-items: center; gap: 7px; padding-left: 6px; background: #2f3035; border-bottom: 1px solid #17171b; }
.dialog-bar h2 { flex: 1; text-align: center; font-size: 11px; font-weight: 600; color: #a9a9ad; padding-right: 57px; }
.dl { width: 10px; height: 10px; border-radius: 50%; background: #505054; } .red { background: #d6606a; } .hi { background: #6c6d6b; }
.dialog-top { display: flex; justify-content: flex-end; padding: 4px 4px 0; height: 34px; }
.gear { width: 20px; height: 20px; border-radius: 5px; background: #626166; display: grid; place-items: center; }
.gear svg { width: 14px; height: 14px; }
.notebook { flex: 1; margin: 8px 8px 0 4px; border: 1px solid #35333d; border-radius: 5px 5px 0 0; border-bottom: 0; background: #292733; padding: 0 6px 6px; display: flex; flex-direction: column; align-items: center; }
.tabs { display: flex; height: 19px; margin-top: -9px; border-radius: 5px; background: #2c2a36; border: 1px solid #3a3943; }
.tab { padding: 0 10px; border-radius: 5px; }
.sel { background: #636269; color: #fff; }
.results { list-style: none; align-self: stretch; flex: 1; margin-top: 4px; background: #1e1c26; padding: 9px 0 0 11px; line-height: 14px; }
.results li { height: 14px; white-space: nowrap; }
.rule { font-weight: 700; display: flex; align-items: center; gap: 4px; }
.rule svg { width: 8px; height: 6px; fill: none; stroke: #c8c8cc; }
.item { padding-left: 18px; }
.show { display: flex; align-items: center; padding: 0 17px 5px 12px; height: 30px; }
.show label { display: flex; align-items: center; gap: 5px; width: 72px; }
.show > span { width: 39px; }
.show label:nth-of-type(2) { width: 55px; } .show label:nth-of-type(3) { width: 73px; } .show label:nth-of-type(4) { flex: 1; }
.show input:checked { background: #3470b4; }
.badge { width: 13px; height: 13px; border-radius: 50%; background: #3a3a3a; color: #eee; font-size: 9px; line-height: 13px; text-align: center; margin-right: 26px; }
.bad { background: #d3606b; }
.btn { height: 17px; border-radius: 5px; background: #5b5963; padding: 0 8px; white-space: nowrap; }
.std { width: 71px; }
.actions { display: flex; align-items: center; gap: 10px; padding: 0 8px 0 12px; height: 35px; }
.grow { flex: 1; }
.primary { width: 76px; height: 22px; border-radius: 6px; background: #366cab; color: #fff; margin-left: -2px; }
```
